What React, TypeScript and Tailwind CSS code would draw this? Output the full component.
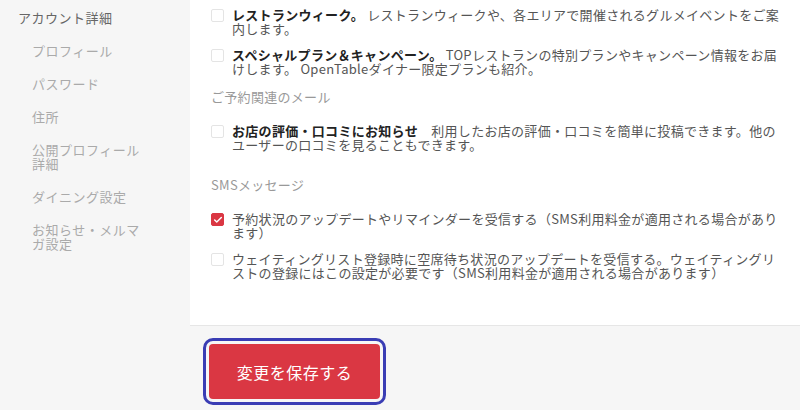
import { Check } from 'lucide-react';

const font = { fontFamily: '"Noto Sans CJK JP", "Noto Sans", sans-serif' };

const sideItems = ['プロフィール', 'パスワード', '住所', '公開プロフィール詳細', 'ダイニング設定', 'お知らせ・メルマガ設定'];

function Row({ title, text, checked, className }: { title?: string; text: string; checked?: boolean; className?: string }) {
  return (
    <div className={`flex gap-[8px] ${className ?? ''}`}>
      <div
        className={`mt-[1px] flex h-[13px] w-[13px] shrink-0 items-center justify-center rounded-[2px] border ${
          checked ? 'border-[#da3743] bg-[#da3743]' : 'border-[#e4e4e4] bg-white'
        }`}
      >
        {checked && <Check className="h-[10px] w-[10px] text-white" strokeWidth={3.5} />}
      </div>
      <p className="w-[554px] text-[13px] leading-[14px] tracking-[0.3px] text-[#555]">
        {title && <span className="font-bold text-[#222]">{title}</span>}
        {text}
      </p>
    </div>
  );
}

export default function App() {
  return (
    <div className="flex h-[410px] w-[800px] overflow-hidden bg-[#f6f6f6]" style={font}>
      <aside className="w-[190px] shrink-0 pl-[18px] pt-[11px]">
        <div className="flex flex-col gap-[19px] text-[13px] leading-[14px] tracking-[0.5px]">
          <div className="text-[#666]">アカウント詳細</div>
          {sideItems.map(item => (
            <div key={item} className="w-[126px] pl-[14px] text-[#aaa]">{item}</div>
          ))}
        </div>
      </aside>

      <main className="flex flex-1 flex-col">
        <div className="h-[326px] border-b border-[#e6e6e6] bg-white pl-[21px] pt-[8px]">
          <Row title="レストランウィーク。" text=" レストランウィークや、各エリアで開催されるグルメイベントをご案内します。" />
          <Row
            className="mt-[12px]"
            title="スペシャルプラン＆キャンペーン。"
            text=" TOPレストランの特別プランやキャンペーン情報をお届けします。 OpenTableダイナー限定プランも紹介。"
          />
          <div className="mt-[14px] text-[13px] leading-[14px] tracking-[0.3px] text-[#999]">ご予約関連のメール</div>
          <Row
            className="mt-[20px]"
            title="お店の評価・口コミにお知らせ"
            text="　利用したお店の評価・口コミを簡単に投稿できます。他のユーザーの口コミを見ることもできます。"
          />
          <div className="mt-[26px] text-[13px] leading-[14px] tracking-[0.3px] text-[#999]">SMSメッセージ</div>
          <Row className="mt-[20px]" checked text="予約状況のアップデートやリマインダーを受信する（SMS利用料金が適用される場合があります）" />
          <Row
            className="mt-[12px]"
            text="ウェイティングリスト登録時に空席待ち状況のアップデートを受信する。ウェイティングリストの登録にはこの設定が必要です（SMS利用料金が適用される場合があります）"
          />
        </div>

        <div className="pl-[19px] pt-[18px]">
          <button
            type="button"
            className="h-[55px] w-[171px] rounded-[4px] bg-[#da3743] text-[16px] tracking-[0.5px] text-white outline-[3px] outline-offset-[3px] outline-[#3a3db4] outline-solid"
          >
            変更を保存する
          </button>
        </div>
      </main>
    </div>
  );
}
